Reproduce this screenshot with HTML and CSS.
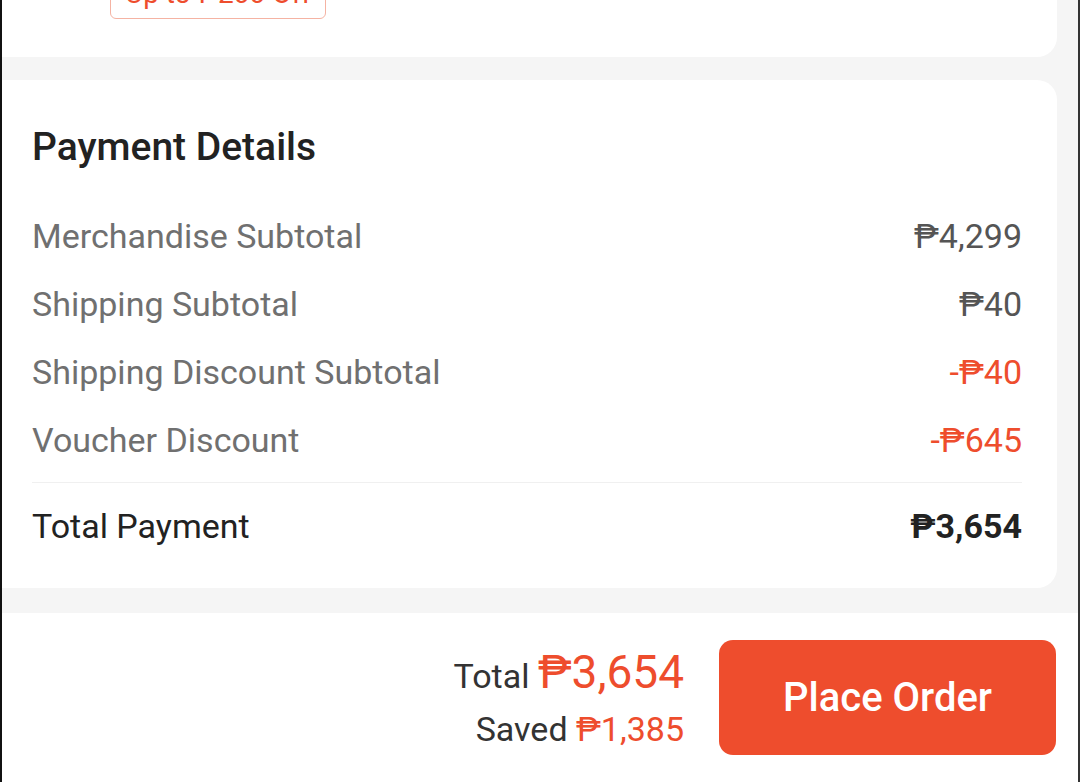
FILE: index.html
```html
<!DOCTYPE html>
<html lang="en">
<head>
    <meta charset="UTF-8">
    <meta name="viewport" content="width=device-width, initial-scale=1.0">
    <title>Checkout</title>
    <link rel="stylesheet" href="styles.css">
</head>
<body>

<div class="screen">
    <div class="content">
        <div class="card voucher-card">
            <span class="tag">Up to ₱200 Off</span>
        </div>

        <div class="card payment-card">
            <h2>Payment Details</h2>
            <div class="row">
                <span class="label">Merchandise Subtotal</span>
                <span class="value">₱4,299</span>
            </div>
            <div class="row">
                <span class="label">Shipping Subtotal</span>
                <span class="value">₱40</span>
            </div>
            <div class="row">
                <span class="label">Shipping Discount Subtotal</span>
                <span class="value discount">-₱40</span>
            </div>
            <div class="row">
                <span class="label">Voucher Discount</span>
                <span class="value discount">-₱645</span>
            </div>
            <div class="divider"></div>
            <div class="row total-row">
                <span class="label">Total Payment</span>
                <span class="value">₱3,654</span>
            </div>
        </div>
    </div>

    <div class="bottom-bar">
        <div class="summary">
            <div class="sum-line">Total <span class="big-price">₱3,654</span></div>
            <div class="sum-line">Saved <span class="saved-price">₱1,385</span></div>
        </div>
        <button class="order-btn">Place Order</button>
    </div>
</div>

</body>
</html>
```

FILE: styles.css
```css
body {
    margin: 0;
    padding: 0;
    font-family: Roboto, "Noto Sans", Arial, sans-serif;
    background-color: #f5f5f5;
}
.screen {
    height: 782px;
    overflow: hidden;
    border-left: 2px solid #111;
    border-right: 2px solid #333;
    background-color: #f5f5f5;
    display: flex;
    flex-direction: column;
}
.content {
    padding-right: 21px;
}
.card {
    background-color: #fff;
    border-radius: 0 20px 20px 0;
}
.voucher-card {
    margin-top: -40px;
    padding: 9px 0 38px 108px;
}
.tag {
    display: inline-block;
    box-sizing: border-box;
    height: 50px;
    line-height: 48px;
    padding: 0 14px;
    border: 1px solid #f5b3a3;
    border-radius: 6px;
    color: #ee4d2d;
    font-size: 28px;
}
.payment-card {
    margin-top: 23px;
    padding: 44px 35px 28px 30px;
}
h2 {
    margin: 0 0 32px;
    font-size: 39px;
    line-height: 46px;
    font-weight: 500;
    color: #222;
}
.row {
    height: 68px;
    display: flex;
    align-items: center;
    justify-content: space-between;
    font-size: 34px;
}
.label {
    color: #707070;
}
.value {
    color: #555;
}
.discount {
    color: #ee4d2d;
}
.divider {
    margin-top: 8px;
    height: 1px;
    background-color: #f0f0f0;
}
.total-row {
    margin-top: 9px;
}
.total-row .label {
    color: #222;
}
.total-row .value {
    color: #222;
    font-weight: 700;
}
.bottom-bar {
    margin-top: 25px;
    flex: 1;
    background-color: #fff;
    display: flex;
    justify-content: flex-end;
    align-items: flex-start;
    gap: 35px;
    padding: 27px 22px 0 0;
}
.summary {
    text-align: right;
    padding-top: 6px;
}
.sum-line {
    font-size: 34px;
    color: #333;
    line-height: 53px;
}
.big-price {
    color: #ee4d2d;
    font-size: 46px;
}
.saved-price {
    color: #ee4d2d;
}
.order-btn {
    width: 337px;
    height: 115px;
    border: none;
    border-radius: 14px;
    background-color: #ee4d2d;
    color: #fff;
    font-family: inherit;
    font-size: 40px;
    font-weight: 500;
    cursor: pointer;
}
```
